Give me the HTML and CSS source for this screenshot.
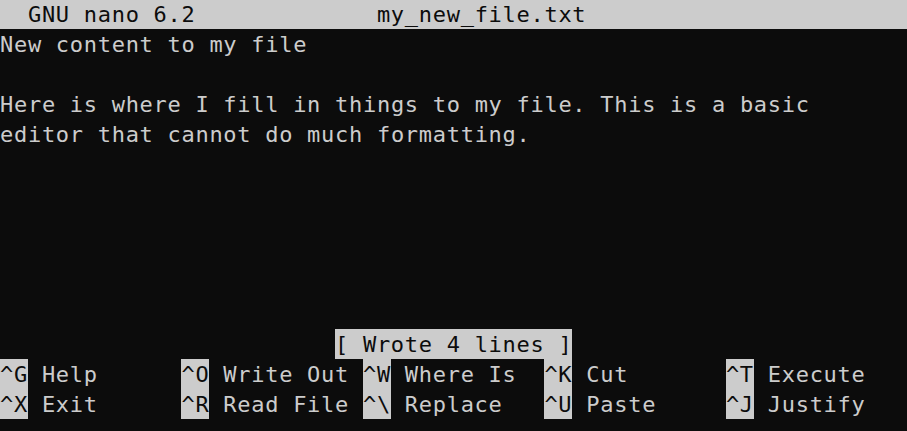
FILE: index.html
```html
<!DOCTYPE html>
<html lang="en">
<head>
<meta charset="utf-8">
<title>GNU nano 6.2 - my_new_file.txt</title>
<link rel="stylesheet" href="styles.css">
</head>
<body>
<main class="term">
  <header class="titlebar">
    <span class="title-app">  GNU nano 6.2</span>
    <span class="title-file">my_new_file.txt</span>
  </header>
  <section class="buffer">
    <div class="line">New content to my file</div>
    <div class="line"></div>
    <div class="line">Here is where I fill in things to my file. This is a basic</div>
    <div class="line">editor that cannot do much formatting.</div>
  </section>
  <div class="status"><span class="status-msg">[ Wrote 4 lines ]</span></div>
  <nav class="shortcuts">
    <div class="sc"><span class="key">^G</span> Help</div>
    <div class="sc"><span class="key">^O</span> Write Out</div>
    <div class="sc"><span class="key">^W</span> Where Is</div>
    <div class="sc"><span class="key">^K</span> Cut</div>
    <div class="sc"><span class="key">^T</span> Execute</div>
    <div class="sc"><span class="key">^X</span> Exit</div>
    <div class="sc"><span class="key">^R</span> Read File</div>
    <div class="sc"><span class="key">^\</span> Replace</div>
    <div class="sc"><span class="key">^U</span> Paste</div>
    <div class="sc"><span class="key">^J</span> Justify</div>
  </nav>
</main>
</body>
</html>
```

FILE: styles.css
```css
:root {
  --cw: 13.96px;
  --lh: 30px;
  --bg: #0c0c0c;
  --fg: #cccccc;
}

html, body {
  margin: 0;
  padding: 0;
  background: var(--bg);
  height: 100%;
  overflow: hidden;
}

.term {
  display: flex;
  flex-direction: column;
  margin-top: -1px;
  font-family: "DejaVu Sans Mono", monospace;
  font-size: 22px;
  letter-spacing: 0.715px;
  line-height: 32px;
  color: var(--fg);
}

.titlebar {
  display: flex;
  height: var(--lh);
  background: var(--fg);
  color: var(--bg);
  white-space: pre;
}

.title-app {
  width: calc(var(--cw) * 27);
  flex: none;
}

.buffer {
  display: flex;
  flex-direction: column;
  height: calc(var(--lh) * 10);
}

.line {
  height: var(--lh);
  white-space: pre;
}

.status {
  height: var(--lh);
  padding-left: calc(var(--cw) * 24);
  white-space: pre;
}

.status-msg {
  display: inline-block;
  height: var(--lh);
  background: var(--fg);
  color: var(--bg);
}

.shortcuts {
  display: grid;
  grid-template-columns: repeat(5, calc(var(--cw) * 13));
  grid-auto-rows: var(--lh);
}

.sc {
  height: var(--lh);
  white-space: pre;
}

.key {
  display: inline-block;
  height: var(--lh);
  background: var(--fg);
  color: var(--bg);
}
```
